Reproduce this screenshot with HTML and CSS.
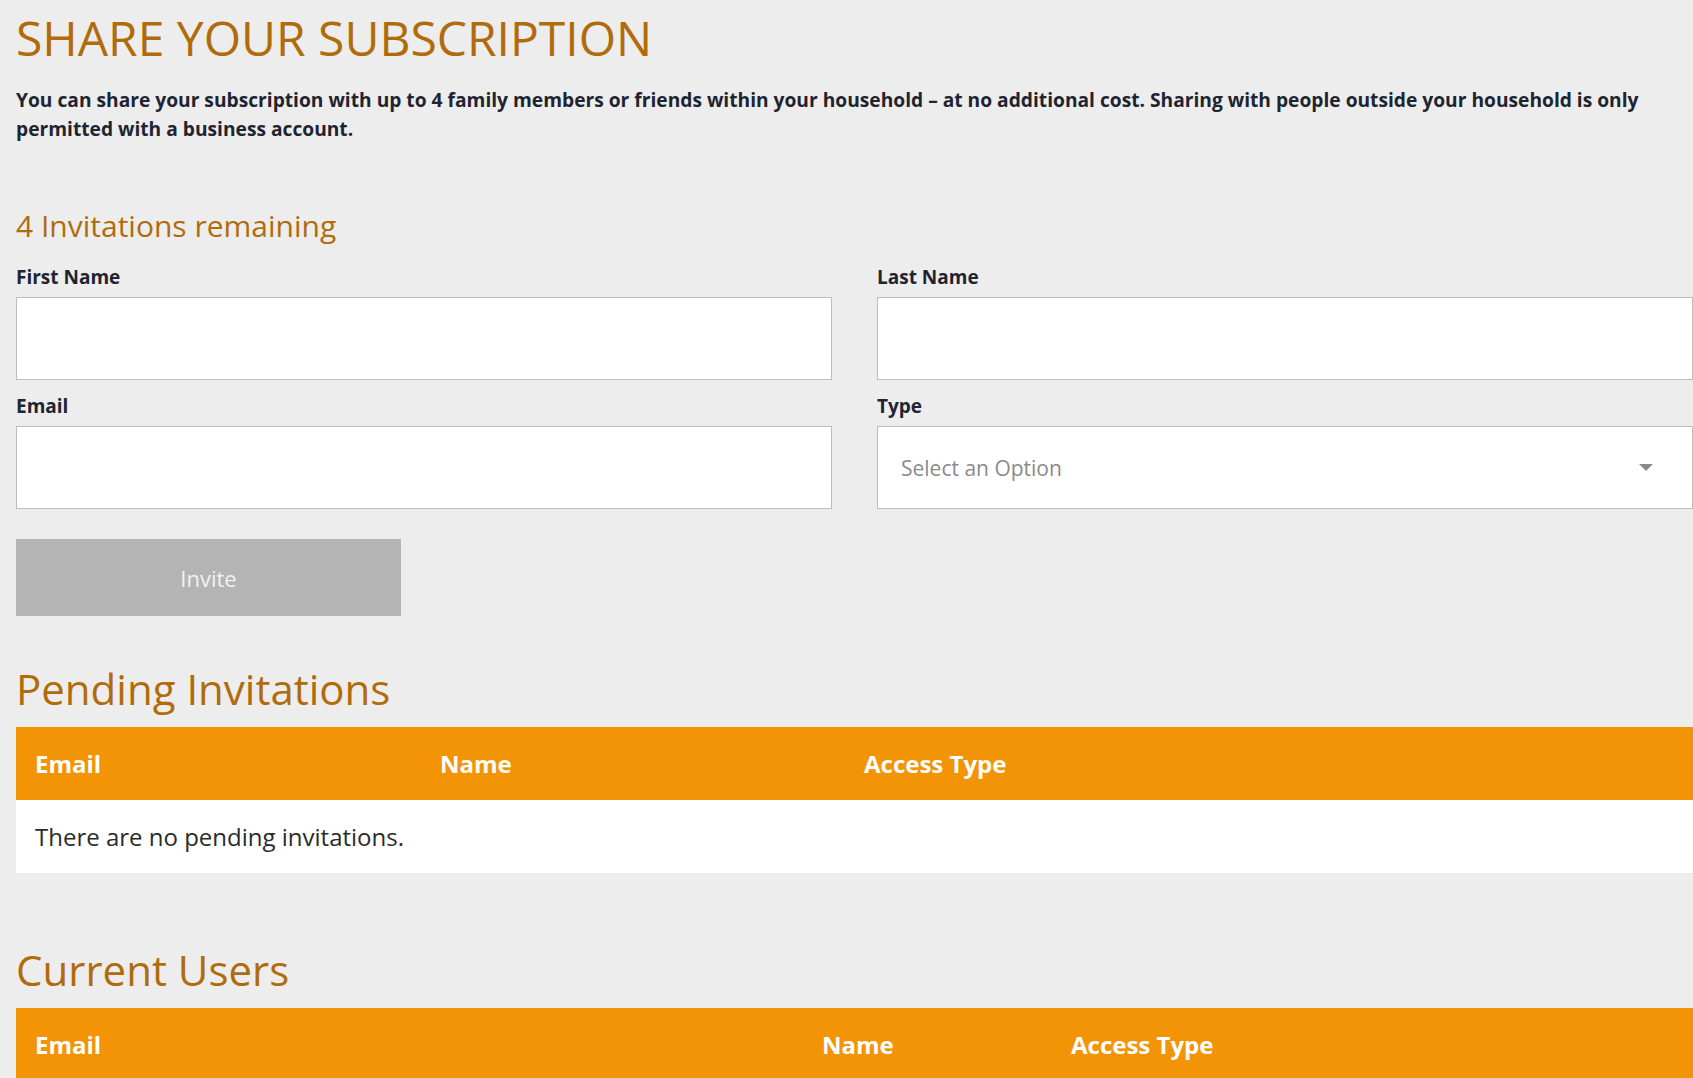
FILE: index.html
```html
<!DOCTYPE html>
<html lang="en">
<head>
<meta charset="utf-8">
<title>Share your subscription</title>
<link rel="stylesheet" href="styles.css">
</head>
<body>
<main class="page">
  <h1 class="title">SHARE YOUR SUBSCRIPTION</h1>
  <p class="intro">You can share your subscription with up to 4 family members or friends within your household – at no additional cost. Sharing with people outside your household is only permitted with a business account.</p>

  <h2 class="remaining">4 Invitations remaining</h2>
  <form class="form">
    <div class="grid">
      <label class="field">
        <span class="label">First Name</span>
        <input class="input" type="text">
      </label>
      <label class="field">
        <span class="label">Last Name</span>
        <input class="input" type="text">
      </label>
      <label class="field">
        <span class="label">Email</span>
        <input class="input" type="email">
      </label>
      <label class="field">
        <span class="label">Type</span>
        <span class="select-wrap">
          <select class="input select">
            <option>Select an Option</option>
          </select>
          <svg class="caret" width="14" height="8" viewBox="0 0 14 8"><path d="M0 0H14L7 7Z" fill="#8a8a8a"/></svg>
        </span>
      </label>
    </div>
    <button class="btn" type="button">Invite</button>
  </form>

  <h2 class="section">Pending Invitations</h2>
  <table class="table pending">
    <thead>
      <tr><th class="c1">Email</th><th class="c2">Name</th><th>Access Type</th></tr>
    </thead>
    <tbody>
      <tr><td colspan="3">There are no pending invitations.</td></tr>
    </tbody>
  </table>

  <h2 class="section">Current Users</h2>
  <table class="table current">
    <thead>
      <tr><th class="c1">Email</th><th class="c2">Name</th><th>Access Type</th></tr>
    </thead>
  </table>
</main>
</body>
</html>
```
FILE: styles.css
```css
html, body {
  margin: 0;
  padding: 0;
  background: #ededed;
}
body {
  font-family: "Open Sans", "Noto Sans", sans-serif;
  color: #1e2430;
}
.page {
  padding: 8px 0 0 16px;
}
.title {
  margin: 0;
  font-size: 48px;
  line-height: 59px;
  font-weight: 400;
  color: #b06c0b;
}
.intro {
  margin: 18px 0 0;
  font-size: 19.2px;
  line-height: 29px;
  font-weight: 700;
  color: #1e2430;
}
.remaining {
  margin: 64px 0 0;
  font-size: 30px;
  line-height: 38px;
  font-weight: 400;
  color: #b06c0b;
}
.form {
  margin: 21px 0 0;
}
.grid {
  display: grid;
  grid-template-columns: 1fr 1fr;
  column-gap: 45px;
  row-gap: 15px;
}
.field {
  display: flex;
  flex-direction: column;
  gap: 8px;
}
.label {
  font-size: 19px;
  line-height: 23px;
  font-weight: 700;
  color: #1e2430;
}
.input {
  box-sizing: border-box;
  width: 100%;
  height: 83px;
  margin: 0;
  border: 1px solid #bdbdbd;
  border-radius: 0;
  background: #fff;
  font-family: inherit;
  font-size: 21px;
  padding: 0 23px;
  outline: none;
}
.select-wrap {
  position: relative;
  display: block;
}
.select {
  appearance: none;
  -webkit-appearance: none;
  color: #8a8a8a;
}
.caret {
  position: absolute;
  right: 40px;
  top: 38px;
  pointer-events: none;
}
.btn {
  display: block;
  box-sizing: border-box;
  width: 385px;
  height: 77px;
  margin: 30px 0 0;
  border: 0;
  background: #b4b4b4;
  color: #f2f2f2;
  font-family: inherit;
  font-size: 22px;
}
.section {
  margin: 49px 0 0;
  font-size: 42px;
  line-height: 48px;
  font-weight: 400;
  color: #b06c0b;
}
.table + .section {
  margin-top: 73px;
}
.table {
  width: 100%;
  margin: 14px 0 0;
  border-collapse: collapse;
  table-layout: fixed;
}
.table th {
  height: 73px;
  padding: 0 0 0 19px;
  background: #f39407;
  color: #fff;
  text-align: left;
  font-size: 24px;
  font-weight: 700;
}
.table td {
  height: 73px;
  padding: 0 0 0 19px;
  background: #fff;
  color: #2b2b2b;
  font-size: 24px;
}
.pending .c1 { width: 386px; }
.pending .c2 { width: 405px; }
.current .c1 { width: 768px; }
.current .c2 { width: 230px; }
```
